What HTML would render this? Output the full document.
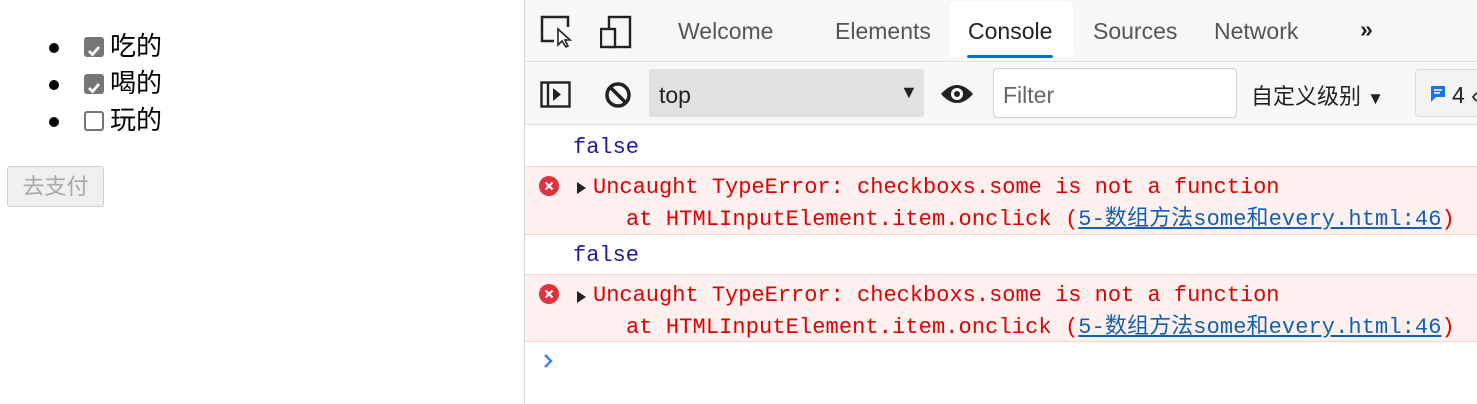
<!DOCTYPE html>
<html><head><meta charset="utf-8"><style>
*{margin:0;padding:0;box-sizing:border-box}
body{width:1477px;height:404px;overflow:hidden;background:#fff;font-family:"Liberation Sans","Noto Sans CJK SC",sans-serif;position:relative}
.a{position:absolute;white-space:nowrap}
.li{position:absolute;left:49px;font-size:26px;color:#000;height:30px;line-height:30px}
.dot{position:absolute;left:0;top:10px;width:10px;height:10px;border-radius:50%;background:#000}
.cb{position:absolute;left:35px;top:4px;width:20px;height:20px;border-radius:3px;background:#767676}
.cb.u{background:#fff;border:2px solid #767676}
.lt{position:absolute;left:61px;top:-2px;white-space:nowrap}
.mono{font-family:"Liberation Mono","Noto Sans CJK SC",monospace;font-size:22px;white-space:nowrap}
.tab{position:absolute;top:18px;font-size:23px;color:#555}
</style></head><body>
<div class="li" style="top:33px"><div class="dot"></div><div class="cb"><svg width="20" height="20"><path d="M5 10l3.5 3.5L15 6" stroke="#fff" stroke-width="2.8" fill="none"/></svg></div><div class="lt">吃的</div></div>
<div class="li" style="top:70px"><div class="dot"></div><div class="cb"><svg width="20" height="20"><path d="M5 10l3.5 3.5L15 6" stroke="#fff" stroke-width="2.8" fill="none"/></svg></div><div class="lt">喝的</div></div>
<div class="li" style="top:107px"><div class="dot"></div><div class="cb u"></div><div class="lt">玩的</div></div>
<div class="a" style="left:7px;top:166px;width:97px;height:41px;background:#efefef;border:1px solid #d0d0d0;border-radius:3px;color:#a8a8a8;font-size:22px;text-align:center;line-height:39px">去支付</div>

<div class="a" style="left:524px;top:0;width:1px;height:404px;background:#d6d6d6"></div>
<div class="a" style="left:525px;top:0;width:952px;height:62px;background:#f7f7f7;border-bottom:1px solid #e0e0e0"></div>
<svg class="a" style="left:540px;top:15px" width="36" height="34"><path d="M14 26H2V2h26v10" stroke="#222" stroke-width="2.5" fill="none"/><path d="M18 14l0 16 4-4 4 6 2-1-3-6h5z" fill="#fff" stroke="#222" stroke-width="1.6"/></svg>
<svg class="a" style="left:600px;top:15px" width="32" height="34"><rect x="9" y="2" width="21" height="30" fill="none" stroke="#222" stroke-width="2.4"/><rect x="1" y="14" width="14" height="18" fill="#f7f7f7" stroke="#222" stroke-width="2.4"/></svg>
<div class="tab" style="left:678px">Welcome</div>
<div class="tab" style="left:835px">Elements</div>
<div class="a" style="left:950px;top:2px;width:123px;height:56px;background:#fff;border-radius:3px"></div>
<div class="tab" style="left:968px;color:#222">Console</div>
<div class="a" style="left:967px;top:55px;width:86px;height:3px;background:#0b6fcf;border-radius:2px"></div>
<div class="tab" style="left:1093px">Sources</div>
<div class="tab" style="left:1214px">Network</div>
<div class="tab" style="left:1360px;color:#222;font-weight:bold;top:16px">»</div>

<div class="a" style="left:525px;top:63px;width:952px;height:62px;background:#f7f7f7;border-bottom:1px solid #ddd"></div>
<svg class="a" style="left:540px;top:81px" width="32" height="28"><rect x="1.5" y="1.5" width="28" height="24" fill="none" stroke="#222" stroke-width="2.4"/><line x1="8" y1="2" x2="8" y2="26" stroke="#222" stroke-width="2.4"/><path d="M13 7v13l8-6.5z" fill="#222"/></svg>
<svg class="a" style="left:604px;top:81px" width="28" height="28"><circle cx="14" cy="14" r="11" fill="none" stroke="#222" stroke-width="3.5"/><line x1="6" y1="6" x2="22" y2="22" stroke="#222" stroke-width="3.5"/></svg>
<div class="a" style="left:649px;top:69px;width:275px;height:48px;background:#e1e1e1;border-radius:3px"></div>
<div class="a" style="left:659px;top:82px;font-size:23px;color:#222">top</div>
<div class="a" style="left:900px;top:82px;font-size:18px;color:#222">▼</div>
<svg class="a" style="left:940px;top:82px" width="34" height="24"><path d="M1 12Q17 -6 33 12Q17 30 1 12z" fill="#222"/><circle cx="17" cy="12" r="6" fill="#fff"/><circle cx="17" cy="12" r="3" fill="#222"/></svg>
<div class="a" style="left:993px;top:68px;width:244px;height:50px;background:#fff;border:1px solid #d0d0d0;border-radius:4px"></div>
<div class="a" style="left:1003px;top:82px;font-size:23px;color:#666">Filter</div>
<div class="a" style="left:1251px;top:79px;font-size:22px;color:#222">自定义级别 <span style="font-size:17px">▼</span></div>
<div class="a" style="left:1415px;top:69px;width:70px;height:48px;background:#f3f3f3;border:1px solid #ddd;border-radius:4px"></div>
<svg class="a" style="left:1430px;top:85px" width="16" height="20"><path d="M1 1h14v11H6l-5 5z" fill="#1a73e8"/><path d="M4 5h8M4 8h6" stroke="#fff" stroke-width="1.5"/></svg>
<div class="a" style="left:1452px;top:82px;font-size:23px;color:#222">4 ‹</div>

<div class="a mono" style="left:573px;top:135px;color:#1a1aa6">false</div>
<div class="a" style="left:525px;top:166px;width:952px;height:69px;background:#fff0f0;border-top:1px solid #fbd3d3;border-bottom:1px solid #fbd3d3"></div>
<div class="a" style="left:525px;top:274px;width:952px;height:68px;background:#fff0f0;border-top:1px solid #fbd3d3;border-bottom:1px solid #fbd3d3"></div>
<div class="a mono" style="left:573px;top:243px;color:#1a1aa6">false</div>

<svg class="a" style="left:539px;top:176px" width="20" height="20"><circle cx="10" cy="10" r="10" fill="#e0323d"/><path d="M6.5 6.5l7 7M13.5 6.5l-7 7" stroke="#fff" stroke-width="2.2"/></svg>
<div class="a" style="left:577px;top:182px;width:0;height:0;border-left:9px solid #222;border-top:6px solid transparent;border-bottom:6px solid transparent"></div>
<div class="a mono" style="left:593px;top:175px;color:#e00000">Uncaught TypeError: checkboxs.some is not a function</div>
<div class="a mono" style="left:626px;top:200px;color:#e00000;letter-spacing:0.1px">at HTMLInputElement.item.onclick (<span style="color:#1260b0;text-decoration:underline">5-数组方法some和every.html:46</span>)</div>

<svg class="a" style="left:539px;top:284px" width="20" height="20"><circle cx="10" cy="10" r="10" fill="#e0323d"/><path d="M6.5 6.5l7 7M13.5 6.5l-7 7" stroke="#fff" stroke-width="2.2"/></svg>
<div class="a" style="left:577px;top:291px;width:0;height:0;border-left:9px solid #222;border-top:6px solid transparent;border-bottom:6px solid transparent"></div>
<div class="a mono" style="left:593px;top:283px;color:#e00000">Uncaught TypeError: checkboxs.some is not a function</div>
<div class="a mono" style="left:626px;top:308px;color:#e00000;letter-spacing:0.1px">at HTMLInputElement.item.onclick (<span style="color:#1260b0;text-decoration:underline">5-数组方法some和every.html:46</span>)</div>

<svg class="a" style="left:542px;top:352px" width="12" height="18"><path d="M3 3l6 6-6 6" stroke="#3b82f6" stroke-width="2.5" fill="none"/></svg>
</body></html>
